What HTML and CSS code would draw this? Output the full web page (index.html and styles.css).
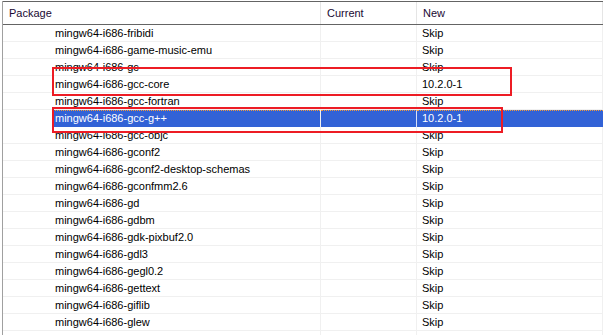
FILE: index.html
```html
<!DOCTYPE html>
<html lang="en">
<head>
  <meta charset="UTF-8">
  <title>Select Packages</title>
  <link rel="stylesheet" href="styles.css">
</head>
<body>
  <div class="listview">
    <div class="header">
      <div class="hcell pkg">Package</div>
      <div class="hcell cur">Current</div>
      <div class="hcell new">New</div>
    </div>

    <div class="rows">
      <div class="row"><div class="cell pkg"><span class="name">mingw64-i686-fribidi</span></div><div class="cell cur"></div><div class="cell new">Skip</div></div>
      <div class="row"><div class="cell pkg"><span class="name">mingw64-i686-game-music-emu</span></div><div class="cell cur"></div><div class="cell new">Skip</div></div>
      <div class="row"><div class="cell pkg"><span class="name">mingw64-i686-gc</span></div><div class="cell cur"></div><div class="cell new">Skip</div></div>
      <div class="row"><div class="cell pkg"><span class="name">mingw64-i686-gcc-core</span></div><div class="cell cur"></div><div class="cell new">10.2.0-1</div></div>
      <div class="row"><div class="cell pkg"><span class="name">mingw64-i686-gcc-fortran</span></div><div class="cell cur"></div><div class="cell new">Skip</div></div>
      <div class="row selected"><div class="cell pkg"><span class="name">mingw64-i686-gcc-g++</span></div><div class="cell cur"></div><div class="cell new">10.2.0-1</div></div>
      <div class="row"><div class="cell pkg"><span class="name">mingw64-i686-gcc-objc</span></div><div class="cell cur"></div><div class="cell new">Skip</div></div>
      <div class="row"><div class="cell pkg"><span class="name">mingw64-i686-gconf2</span></div><div class="cell cur"></div><div class="cell new">Skip</div></div>
      <div class="row"><div class="cell pkg"><span class="name">mingw64-i686-gconf2-desktop-schemas</span></div><div class="cell cur"></div><div class="cell new">Skip</div></div>
      <div class="row"><div class="cell pkg"><span class="name">mingw64-i686-gconfmm2.6</span></div><div class="cell cur"></div><div class="cell new">Skip</div></div>
      <div class="row"><div class="cell pkg"><span class="name">mingw64-i686-gd</span></div><div class="cell cur"></div><div class="cell new">Skip</div></div>
      <div class="row"><div class="cell pkg"><span class="name">mingw64-i686-gdbm</span></div><div class="cell cur"></div><div class="cell new">Skip</div></div>
      <div class="row"><div class="cell pkg"><span class="name">mingw64-i686-gdk-pixbuf2.0</span></div><div class="cell cur"></div><div class="cell new">Skip</div></div>
      <div class="row"><div class="cell pkg"><span class="name">mingw64-i686-gdl3</span></div><div class="cell cur"></div><div class="cell new">Skip</div></div>
      <div class="row"><div class="cell pkg"><span class="name">mingw64-i686-gegl0.2</span></div><div class="cell cur"></div><div class="cell new">Skip</div></div>
      <div class="row"><div class="cell pkg"><span class="name">mingw64-i686-gettext</span></div><div class="cell cur"></div><div class="cell new">Skip</div></div>
      <div class="row"><div class="cell pkg"><span class="name">mingw64-i686-giflib</span></div><div class="cell cur"></div><div class="cell new">Skip</div></div>
      <div class="row"><div class="cell pkg"><span class="name">mingw64-i686-glew</span></div><div class="cell cur"></div><div class="cell new">Skip</div></div>
      <div class="row"><div class="cell pkg"><span class="name"></span></div><div class="cell cur"></div><div class="cell new"></div></div>
    </div>

    <!-- red markup boxes drawn over the list -->
    <div class="mark mark-core"></div>
    <div class="mark mark-gpp"></div>
  </div>
</body>
</html>
```

FILE: styles.css
```css
body {
  margin: 0;
  background: #fff;
  color: #000;
  font-family: 'Liberation Sans', Arial, sans-serif;
  font-size: 11px;
  overflow: hidden;
}

.listview {
  position: relative;
  margin: 1px 0 0 2px;
  border-left: 1px solid #a0a0a0;
  height: 340px;
}

.header {
  display: grid;
  grid-template-columns: 318px 96px 1fr;
  height: 24px;
  box-sizing: border-box;
  border-top: 1px solid #646464;
  border-bottom: 1px solid #646464;
}

.hcell {
  line-height: 22px;
  border-right: 1px solid #e5e5e5;
  color: #1a0a33;
  padding-left: 6px;
}

.row {
  display: grid;
  grid-template-columns: 318px 96px 1fr;
  height: 17px;
  box-sizing: border-box;
  border-bottom: 1px solid #f0f0f0;
}

.cell {
  line-height: 16px;
  border-right: 1px solid #f0f0f0;
  white-space: nowrap;
  overflow: hidden;
}

.cell.pkg {
  padding-left: 49px;
}

.cell.pkg .name {
  display: block;
  height: 16px;
  padding-left: 3px;
}

.cell.cur,
.cell.new {
  padding-left: 5px;
}

/* selected row: blue fill starts at the name, dotted focus line on top */
.row.selected {
  border-bottom: none;
  color: #fff;
}

.row.selected .name,
.row.selected .cur,
.row.selected .new {
  box-sizing: border-box;
  height: 17px;
  background: #3262d6;
  border-top: 1px dotted #f29a3a;
  line-height: 15px;
}

.row.selected .cur {
  border-right-color: #d8e1f7;
}

.row.selected .new {
  border-right: none;
}

.mark {
  position: absolute;
  border: 2px solid #ed1c24;
}

.mark-core {
  left: 49px;
  top: 66px;
  width: 456px;
  height: 25px;
}

.mark-gpp {
  left: 49px;
  top: 106px;
  width: 447px;
  height: 22px;
}
```
